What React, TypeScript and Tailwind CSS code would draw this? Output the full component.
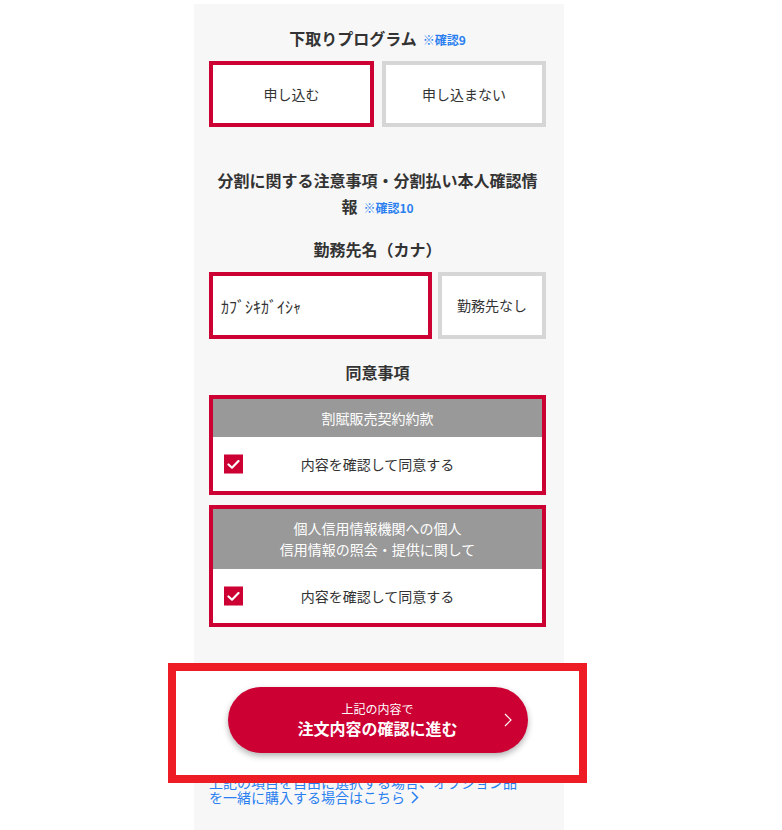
import React from "react";

const font = { fontFamily: '"Noto Sans CJK JP", "Noto Sans", sans-serif' };

function Check() {
  return (
    <div className="absolute left-[11px] top-1/2 -translate-y-1/2 w-[19px] h-[19px] bg-[#cc0033] flex items-center justify-center">
      <svg width="13" height="10" viewBox="0 0 13 10" fill="none">
        <path d="M1.5 5 L5 8.2 L11.5 1.5" stroke="#fff" strokeWidth="2.2" strokeLinecap="round" strokeLinejoin="round" />
      </svg>
    </div>
  );
}

function Agreement({ title, headerH }: { title: React.ReactNode; headerH: string }) {
  return (
    <div className="border-4 border-[#cc0033] bg-white">
      <div className={`${headerH} bg-[#999999] flex items-center justify-center text-center text-white text-[14px] leading-[21px]`}>
        {title}
      </div>
      <div className="relative h-[54px] flex items-center justify-center text-[14px] text-[#333]">
        <Check />
        <span>内容を確認して同意する</span>
      </div>
    </div>
  );
}

export default function App() {
  return (
    <div className="w-[782px] h-[830px] bg-white overflow-hidden" style={font}>
      <div className="ml-[194px] mt-[4px] w-[370px] h-[900px] bg-[#f7f7f7] pl-[15px] pr-[18px] pt-[21px] text-[#333]">
        <h2 className="text-center text-[16px] font-bold leading-[26px]">
          下取りプログラム
          <span className="ml-[6px] text-[12px] leading-none text-[#2a7ff0]">※確認9</span>
        </h2>
        <div className="mt-[10px] flex gap-[8px]">
          <div className="w-[165px] h-[66px] border-4 border-[#cc0033] bg-white flex items-center justify-center text-[14px]">
            申し込む
          </div>
          <div className="w-[164px] h-[66px] border-4 border-[#d6d6d6] bg-white flex items-center justify-center text-[14px]">
            申し込まない
          </div>
        </div>

        <h2 className="mt-[40px] text-center text-[16px] font-bold leading-[26px]">
          分割に関する注意事項・分割払い本人確認情
          <br />
          報<span className="ml-[6px] text-[12px] leading-none text-[#2a7ff0]">※確認10</span>
        </h2>
        <h3 className="mt-[17px] text-center text-[16px] font-bold leading-[26px]">勤務先名（カナ）</h3>
        <div className="mt-[10px] flex gap-[6px]">
          <div className="w-[223px] h-[67px] border-4 border-[#cc0033] bg-white flex items-center pl-[8px] text-[16px]">
            ｶﾌﾞｼｷｶﾞｲｼｬ
          </div>
          <div className="w-[108px] h-[67px] border-4 border-[#d6d6d6] bg-white flex items-center justify-center text-[14px]">
            勤務先なし
          </div>
        </div>

        <h3 className="mt-[20px] text-center text-[16px] font-bold leading-[26px]">同意事項</h3>
        <div className="mt-[10px] flex flex-col gap-[10px]">
          <Agreement title="割賦販売契約約款" headerH="h-[38px]" />
          <Agreement
            headerH="h-[60px]"
            title={
              <span>
                個人信用情報機関への個人
                <br />
                信用情報の照会・提供に関して
              </span>
            }
          />
        </div>

        <div className="relative mt-[60px] h-[66px] flex justify-center">
          <div className="absolute left-[-41px] top-[-24px] w-[419px] h-[120px] border-8 border-[#ee1c25] bg-white" />
          <button className="relative z-10 w-[300px] h-[66px] rounded-full bg-[#cc0033] text-white flex flex-col items-center justify-center shadow-[0_3px_6px_rgba(0,0,0,0.3)]">
            <span className="text-[12px] leading-[16px]">上記の内容で</span>
            <span className="text-[16px] font-bold leading-[22px]">注文内容の確認に進む</span>
            <svg className="absolute right-[16px] top-1/2 -translate-y-1/2" width="8" height="14" viewBox="0 0 8 14" fill="none">
              <path d="M1 1 L7 7 L1 13" stroke="#fff" strokeWidth="1.2" />
            </svg>
          </button>
        </div>

        <p className="mt-[22px] text-[14px] leading-[15px] text-[#2a7ff0]">
          上記の項目を自由に選択する場合、オプション品
          <br />
          を一緒に購入する場合はこちら
          <svg className="inline-block ml-[6px] align-[-1px]" width="8" height="13" viewBox="0 0 8 13" fill="none">
            <path d="M1 1 L6.5 6.5 L1 12" stroke="#2a7ff0" strokeWidth="1.5" />
          </svg>
        </p>
      </div>
    </div>
  );
}
